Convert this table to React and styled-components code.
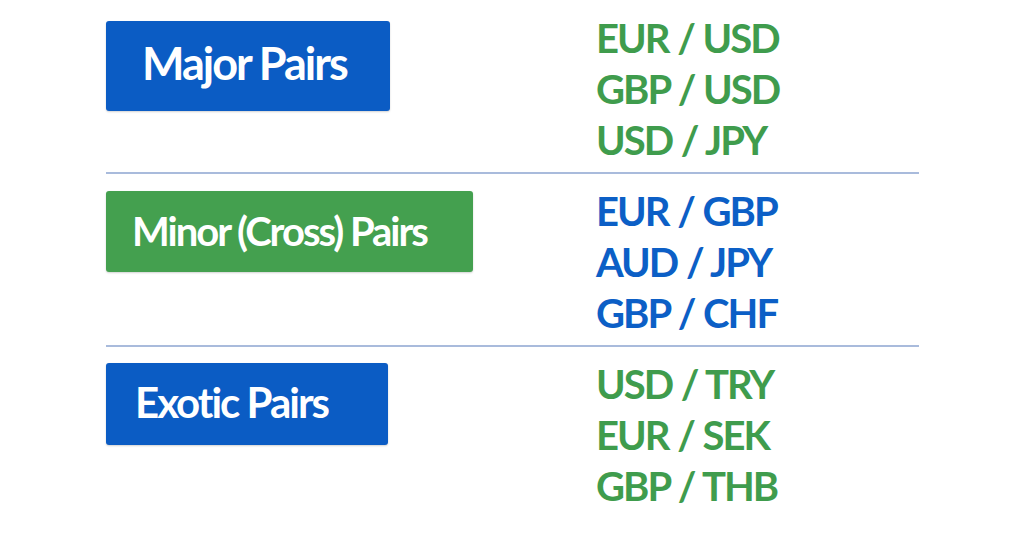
import React from 'react'
import styled, { createGlobalStyle } from 'styled-components'

const sections = [
  {
    label: 'Major Pairs',
    tone: 'blue',
    pairsTone: 'green',
    width: 284,
    height: 90,
    padLeft: 36,
    size: 45,
    offset: 8,
    lift: 5,
    pairs: ['EUR / USD', 'GBP / USD', 'USD / JPY']
  },
  {
    label: 'Minor (Cross) Pairs',
    tone: 'green',
    pairsTone: 'blue',
    width: 367,
    height: 81,
    padLeft: 26,
    size: 40,
    offset: 5,
    lift: 2,
    pairs: ['EUR / GBP', 'AUD / JPY', 'GBP / CHF']
  },
  {
    label: 'Exotic Pairs',
    tone: 'blue',
    pairsTone: 'green',
    width: 282,
    height: 82,
    padLeft: 29,
    size: 42,
    offset: 4,
    lift: 4,
    pairs: ['USD / TRY', 'EUR / SEK', 'GBP / THB']
  }
]

const colors = {
  blue: '#0b5cc4',
  green: '#44a04f'
}

const textColors = {
  blue: '#0c5fc6',
  green: '#3f9c4d'
}

const App = () => {
  return (<>
    <GlobalStyle />
    <Page>
      {sections.map((s, i) => (
        <React.Fragment key={s.label}>
          {i > 0 && <Divider />}
          <Section>
            <Label
              $tone={s.tone}
              $width={s.width}
              $height={s.height}
              $padLeft={s.padLeft}
              $size={s.size}
              $offset={s.offset}
              $lift={s.lift}
            >
              {s.label}
            </Label>
            <PairList $tone={s.pairsTone}>
              {s.pairs.map((p) => <Pair key={p}>{p}</Pair>)}
            </PairList>
          </Section>
        </React.Fragment>
      ))}
    </Page>
  </>)
}

const GlobalStyle = createGlobalStyle`
  html, body {
    margin: 0;
    padding: 0;
    background: #fff;
  }
  body {
    font-family: Lato, "Open Sans", sans-serif;
  }
`

const Page = styled.div`
  width: 1024px;
  height: 536px;
  padding-top: 13px;
  box-sizing: border-box;
  background: #fff;
  overflow: hidden;
`

const Section = styled.div`
  display: grid;
  grid-template-columns: 490px auto;
  padding-left: 106px;
  align-items: start;
`

const Label = styled.div`
  display: flex;
  align-items: center;
  box-sizing: border-box;
  width: ${(p) => p.$width}px;
  height: ${(p) => p.$height}px;
  margin-top: ${(p) => p.$offset}px;
  padding-left: ${(p) => p.$padLeft}px;
  padding-bottom: ${(p) => p.$lift}px;
  background: ${(p) => colors[p.$tone]};
  border-radius: 3px;
  box-shadow: 0 1px 2px rgba(0, 0, 0, 0.18);
  color: #fff;
  font-weight: 700;
  font-size: ${(p) => p.$size}px;
  letter-spacing: -2px;
  line-height: 1;
  white-space: nowrap;
`

const PairList = styled.div`
  display: flex;
  flex-direction: column;
  color: ${(p) => textColors[p.$tone]};
`

const Pair = styled.div`
  font-weight: 700;
  font-size: 40px;
  letter-spacing: -2px;
  word-spacing: 1px;
  line-height: 51px;
  height: 51px;
  white-space: nowrap;
`

const Divider = styled.div`
  width: 813px;
  height: 2px;
  margin: 6px 0 12px 106px;
  background: #a9bbdc;
`

export default App
